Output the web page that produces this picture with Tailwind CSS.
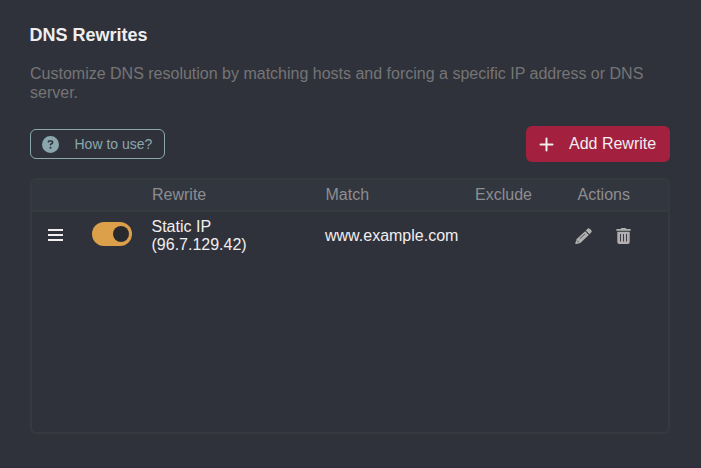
<!DOCTYPE html>
<html lang="en">
<head>
<meta charset="utf-8">
<title>DNS Rewrites</title>
<script src="https://cdn.jsdelivr.net/npm/@tailwindcss/browser@4"></script>
</head>
<body class="h-[468px] overflow-hidden border-b border-[#332a3b] bg-[#30323b] pt-[25px] pr-[31px] pl-[30px] font-['Liberation_Sans',Arial,sans-serif] text-base text-[#f0eeee]">
  <h1 class="-ml-[0.5px] text-[18px] leading-[20px] font-bold">DNS Rewrites</h1>
  <p class="mt-[19px] -mr-px leading-[19px] text-[#757575]">Customize DNS resolution by matching hosts and forcing a specific IP address or DNS server.</p>
  <div class="mt-[24px] flex h-9 items-center justify-between">
    <button class="flex h-[30px] w-[135px] items-center rounded-md border border-[#8aa7ae] pl-[11px] text-[14px] text-[#8aa7ae]">
      <svg class="size-[17px]" viewBox="0 0 512 512" fill="currentColor"><path d="M256 512A256 256 0 1 0 256 0a256 256 0 1 0 0 512zM169.800 165.300c7.900-22.300 29.100-37.300 52.800-37.300h58.300c34.900 0 63.100 28.300 63.100 63.100c0 22.600-12.100 43.500-31.700 54.800L280 264.400c-.2 13-10.900 23.600-24 23.600c-13.300 0-24-10.700-24-24V250.500c0-8.600 4.600-16.500 12.100-20.800l44.300-25.400c4.700-2.700 7.600-7.700 7.600-13.100c0-8.400-6.800-15.100-15.100-15.100H222.600c-3.400 0-6.400 2.100-7.500 5.300l-.4 1.200c-4.400 12.500-18.200 19-30.600 14.600s-19-18.200-14.600-30.600l.4-1.200zM224 352a32 32 0 1 1 64 0 32 32 0 1 1-64 0z"/></svg>
      <span class="ml-[15.500px] whitespace-nowrap">How to use?</span>
    </button>
    <button class="flex h-9 w-[144px] items-center rounded-md bg-[#a3203e] pl-[13px]">
      <svg class="mt-px size-[15px]" viewBox="0 0 15 15" fill="none" stroke="currentColor" stroke-width="2" stroke-linecap="round"><path d="M7.500 1.500v12M1.500 7.500h12"/></svg>
      <span class="ml-[15px] whitespace-nowrap">Add Rewrite</span>
    </button>
  </div>
  <div class="mt-4 h-64 overflow-hidden rounded-md border-2 border-[#363940]">
    <div class="grid h-8 grid-cols-[59px_61px_173px_150px_102px_1fr] border-b-2 border-[#363940] bg-[#32363e] leading-[29px] text-[#8d8d91]">
      <span></span><span></span><span>Rewrite</span><span class="pl-[0.5px]">Match</span><span>Exclude</span><span class="pl-[0.5px]">Actions</span>
    </div>
    <div class="grid h-[46px] grid-cols-[59px_61px_173px_150px_102px_1fr] items-center">
      <svg class="mt-px ml-4 h-[13px] w-[15px]" viewBox="0 0 15 13"><path d="M0 0h15v2H0zM0 5h15v2H0zM0 10h15v2H0z" fill="currentColor"/></svg>
      <span class="-mt-[2px] ml-px flex h-6 w-10 items-center justify-end rounded-full bg-[#dca04a] pr-[3px]"><span class="size-4 rounded-full bg-[#292a2e]"></span></span>
      <span class="mt-[2px] -ml-[0.5px] leading-[18px]">Static IP<br>(96.7.129.42)</span>
      <span class="mt-[2px]">www.example.com</span>
      <span></span>
      <span class="mt-px flex items-center text-[#b0b0b1]">
        <svg class="-ml-[2px] h-4 w-[17px]" viewBox="0 0 17 16" fill="currentColor"><path d="M10.800 2.500 12.400.9Q13.600-.3 14.900.9l1.200 1.200q1.200 1.300 0 2.500L14.500 6.200zM10.100 3.200 13.800 6.900 5.900 14.500Q5.400 15 4.700 15.200L.9 16Q.2 16 .3 15.300L1.300 11.800Q1.500 11.200 2 10.800z"/><path d="M4.800 10.800 10 5.900M1.900 12.400l2 2" stroke="#30323b" stroke-width=".75"/></svg>
        <svg class="ml-[24px] h-4 w-[15px]" viewBox="0 0 15 16" fill="currentColor"><path d="M5.300 0h4.400l.7 1H14q.8 0 .8.900t-.8.900H1Q.2 2.800.2 1.900T1 1h3.600zM1.300 3.800h12.400V14q0 2-2 2H3.300q-2 0-2-2z"/><path d="M4.500 6v7.500M7.500 6v7.500M10.500 6v7.500" stroke="#44374a"/></svg>
      </span>
    </div>
  </div>
</body>
</html>
